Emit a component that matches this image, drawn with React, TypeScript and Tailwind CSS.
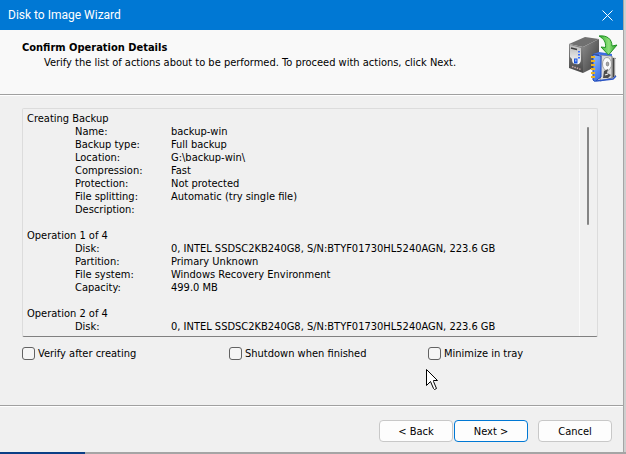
import { useState } from "react";

interface Section {
  title: string;
  rows: [string, string][];
}

const disk = "0, INTEL SSDSC2KB240G8, S/N:BTYF01730HL5240AGN, 223.6 GB";

const sections: Section[] = [
  {
    title: "Creating Backup",
    rows: [
      ["Name:", "backup-win"],
      ["Backup type:", "Full backup"],
      ["Location:", "G:\\backup-win\\"],
      ["Compression:", "Fast"],
      ["Protection:", "Not protected"],
      ["File splitting:", "Automatic (try single file)"],
      ["Description:", ""],
    ],
  },
  {
    title: "Operation 1 of 4",
    rows: [
      ["Disk:", disk],
      ["Partition:", "Primary Unknown"],
      ["File system:", "Windows Recovery Environment"],
      ["Capacity:", "499.0 MB"],
    ],
  },
  {
    title: "Operation 2 of 4",
    rows: [["Disk:", disk]],
  },
];

const options = [
  { id: "verify", label: "Verify after creating" },
  { id: "shutdown", label: "Shutdown when finished" },
  { id: "tray", label: "Minimize in tray" },
];

function BackupIcon() {
  return (
    <svg viewBox="0 0 50 50" className="h-[50px] w-[50px]" aria-hidden="true">
      <defs>
        <linearGradient id="side" x1="0" x2="1" y2="1">
          <stop offset="0" stopColor="#8c8c8c" />
          <stop offset="1" stopColor="#3a3a3a" />
        </linearGradient>
        <linearGradient id="front" x1="0" x2="0" y2="1">
          <stop offset="0" stopColor="#8a8a8a" />
          <stop offset="1" stopColor="#484848" />
        </linearGradient>
        <linearGradient id="panel" x1="0" x2="0" y2="1">
          <stop offset="0" stopColor="#b9b9b9" />
          <stop offset="1" stopColor="#fafafa" />
        </linearGradient>
        <linearGradient id="arrow" x1="0" x2="1">
          <stop offset="0" stopColor="#2fae2f" />
          <stop offset="0.55" stopColor="#8ee07a" />
          <stop offset="1" stopColor="#1f9a22" />
        </linearGradient>
        <linearGradient id="cover" x1="0" x2="0.4" y2="1">
          <stop offset="0" stopColor="#8fbcff" />
          <stop offset="1" stopColor="#3f74e6" />
        </linearGradient>
      </defs>
      {/* tower */}
      <path d="M0 10 16 3 30 5 14 13Z" fill="#707070" />
      <path d="M14 13 30 5V31L14 39Z" fill="url(#side)" />
      <path d="M0 10 14 13V39L0 34Z" fill="url(#front)" />
      <path d="M1 11 12 14V25C12 29 10 31 7 30 4 30 3 28 3 25L1 23Z" fill="url(#panel)" />
      <path d="M2 14 8 15.500" stroke="#3c3c3c" strokeWidth="1.5" />
      <path d="M5 24.500h3.500v5H5Z" fill="#1d55dc" />
      <path d="M6 25.500h1.500v2H6Z" fill="#8ab4ff" />
      <path d="M10 17v1.500M10 20v1.500M10 23v1.500" stroke="#2a62ff" strokeWidth="1.8" />
      <path d="M3 32.500 12 35.500" stroke="#c4a8a8" strokeWidth="1.5" strokeDasharray="1.500 1" />
      {/* binder with the drive inside */}
      <path d="M33 22 47 24V42L43 45Z" fill="#9a9a9a" />
      <path d="M32 21 43 22V44L31 47Z" fill="#d8d8d8" stroke="#6c6c6c" strokeWidth="0.8" />
      <ellipse cx="38" cy="30" rx="4.500" ry="6.500" fill="#fafafa" stroke="#909090" strokeWidth="0.8" />
      <ellipse cx="38.500" cy="30" rx="1.300" ry="2" fill="#aaa" stroke="#666" strokeWidth="0.6" />
      <path d="M34 44 35 37 39 35 38 39 42 41 39 44Z" fill="#4c4c4c" />
      <path d="M36 41 39 40" stroke="#eee" strokeWidth="1.2" />
      <path d="M44.500 24V43" stroke="#444" />
      <path d="M46.500 25V41" stroke="#e5e5e5" />
      <path d="M27 47 44 45 47 42" fill="none" stroke="#2a55c8" strokeWidth="1.4" />
      <path d="M24 20 30 18 43 20V22L32 21Z" fill="#3d6de0" />
      <path d="M24 20.500 32 22V43L26 47.500 24 46Z" fill="url(#cover)" stroke="#2049b5" />
      <path
        d="M22 23h4M22 27h4M22 31h4M22 35h4M22 39h4M22 43h4"
        stroke="#eab223"
        strokeWidth="2"
      />
      {/* arrow */}
      <path
        d="M30 2C38 1 43 5 43 12L48 11 39.500 21 32 13 36.500 13.500C37 8 35 5 30 2Z"
        fill="url(#arrow)"
        stroke="#168a1a"
        strokeWidth="0.9"
        strokeLinejoin="round"
      />
    </svg>
  );
}

function Pointer() {
  return (
    <svg
      viewBox="0 0 12 21"
      className="pointer-events-none absolute -left-0.5 top-[22px] h-[21px] w-3"
      aria-hidden="true"
    >
      <path
        d="M.5.5V16.5L4.500 12.500 7.500 19.500 8.500 20.500 10.500 19.500 7.500 12.500V11.500H11.500Z"
        fill="#fff"
        stroke="#000"
      />
    </svg>
  );
}

const buttonClass =
  "h-[22px] w-[74px] rounded border bg-[#fdfdfd] text-[11px] leading-[13px]";

export default function App() {
  const [checked, setChecked] = useState<Record<string, boolean>>({});

  return (
    <div className="flex min-h-screen flex-col bg-[#cfcfcf] font-['DejaVu_Sans_Condensed','DejaVu_Sans',sans-serif] text-[11px] leading-[13px] text-black">
      <main className="mr-[2px] flex flex-1 flex-col border-r border-[#a5a5a5] bg-[#f0f0f0]">
        <div className="flex h-[30px] items-center justify-between bg-[#0078d4] pl-2 pr-[10px] text-white">
          <h1 className="font-[Roboto,sans-serif] text-[12px] leading-4">
            Disk to Image Wizard
          </h1>
          <button type="button" aria-label="Close">
            <svg viewBox="0 0 11 11" className="h-[11px] w-[11px]">
              <path d="M.5.5 10.500 10.500M10.500.5.5 10.500" stroke="#fff" />
            </svg>
          </button>
        </div>

        <header className="flex h-[65px] justify-between border-b border-[#a0a0a0] bg-[#f9f9f9] pl-[22px] pr-1">
          <div className="pt-[11px]">
            <h2 className="font-bold">Confirm Operation Details</h2>
            <p className="mt-0.5 pl-[22px]">
              Verify the list of actions about to be performed. To proceed with
              actions, click Next.
            </p>
          </div>
          <div className="pt-1">
            <BackupIcon />
          </div>
        </header>

        <section className="flex flex-1 flex-col border-t border-white px-[22px] pt-3">
          <div className="mr-[3px] flex flex-1 rounded-xs border border-[#dcdcdc] border-b-[#808080]">
            <div className="flex-1 space-y-[13px] pl-1 pt-[3px]">
              {sections.map((section) => (
                <div key={section.title}>
                  <h3>{section.title}</h3>
                  <dl className="grid grid-cols-[96px_1fr] pl-12">
                    {section.rows.map(([name, value]) => (
                      <div key={name} className="contents">
                        <dt>{name}</dt>
                        <dd>{value}</dd>
                      </div>
                    ))}
                  </dl>
                </div>
              ))}
            </div>
            <div className="w-[18px] border-l border-[#fafafa] pl-[7px] pt-[18px]">
              <div className="h-[98px] w-0.5 rounded-full bg-[#858585]" />
            </div>
          </div>

          <div className="grid grid-cols-[207px_199px_1fr] pb-[45px] pt-[10px]">
            {options.map(({ id, label }) => (
              <div key={id} className="relative flex items-center gap-[3px]">
                <input
                  id={id}
                  type="checkbox"
                  checked={checked[id] ?? false}
                  onChange={(e) =>
                    setChecked({ ...checked, [id]: e.target.checked })
                  }
                  className="h-[13px] w-[13px] appearance-none rounded-[3px] border border-[#626262] bg-[#f5f5f5] checked:bg-[#0067c0]"
                />
                <label htmlFor={id}>{label}</label>
                {id === "tray" && <Pointer />}
              </div>
            ))}
          </div>
        </section>

        <footer className="border-t border-[#a0a0a0]">
          <div className="flex justify-end border-t border-white pb-[10px] pr-[11px] pt-[13px]">
            <button type="button" className={`${buttonClass} border-[#c8c8c8]`}>
              &lt; Back
            </button>
            <button
              type="button"
              className={`${buttonClass} ml-px border-[#0078d4]`}
            >
              Next &gt;
            </button>
            <button
              type="button"
              className={`${buttonClass} ml-[10px] border-[#c8c8c8]`}
            >
              Cancel
            </button>
          </div>
        </footer>
      </main>
      <div className="h-[2px] bg-[#a5a5a5]">
        <div className="h-full w-[85px] bg-[#0a3f86]" />
      </div>
    </div>
  );
}
